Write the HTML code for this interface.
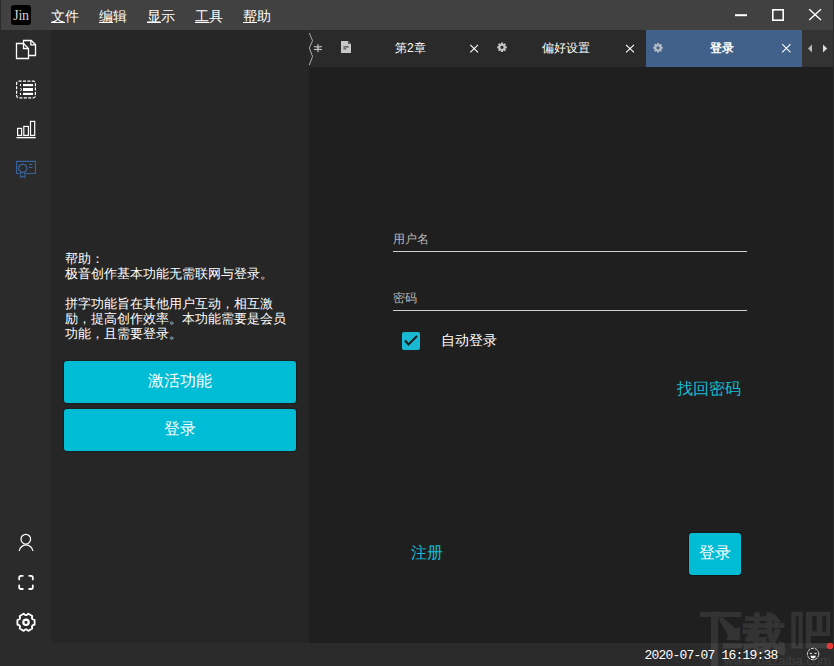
<!DOCTYPE html>
<html><head><meta charset="utf-8">
<style>
*{box-sizing:border-box;margin:0;padding:0}
html,body{width:834px;height:666px;overflow:hidden;background:#1f1f1f;font-family:"Liberation Sans",sans-serif;color:#fff}
.abs{position:absolute;white-space:nowrap}
#title{left:0;top:0;width:834px;height:30px;background:#414141}
#logo{left:11px;top:5px;width:20px;height:20px;background:#000;border-radius:3px}
.menu{top:7px;font-size:14px;line-height:18px;color:#fff}
.menu u{text-decoration:none}
#iconbar{left:0;top:30px;width:51px;height:613px;background:#2b2b2b}
#lpanel{left:51px;top:30px;width:258px;height:613px;background:#262626}
#tabbar{left:309px;top:30px;width:525px;height:37px;background:#2a2a2a}
#main{left:309px;top:67px;width:525px;height:576px;background:#1f1f1f}
#status{left:0;top:643px;width:834px;height:23px;background:#2b2b2b}
.tab{top:40px;font-size:12px;line-height:16px;color:#fff}
.btn{background:#00bcd4;border-radius:3px;box-shadow:0 0 1px 1px rgba(0,0,0,0.25)}
.bt{color:#fff;font-size:16px;line-height:18px}
</style></head><body>
<div id="title" class="abs"></div>
<div id="logo" class="abs"></div>
<div class="abs" style="left:12px;top:8px;width:18px;font-family:'Liberation Serif',serif;font-size:14px;line-height:16px;color:#d0d0d0;text-align:center;letter-spacing:-0.3px">Jin</div>
<div class="abs menu" style="left:51px"><u>文</u>件</div>
<div class="abs menu" style="left:99px"><u>编</u>辑</div>
<div class="abs menu" style="left:147px"><u>显</u>示</div>
<div class="abs menu" style="left:195px"><u>工</u>具</div>
<div class="abs menu" style="left:243px"><u>帮</u>助</div>
<div class="abs" style="left:51px;top:21.5px;width:14px;height:1.5px;background:#fff"></div>
<div class="abs" style="left:99px;top:21.5px;width:14px;height:1.5px;background:#fff"></div>
<div class="abs" style="left:147px;top:21.5px;width:14px;height:1.5px;background:#fff"></div>
<div class="abs" style="left:195px;top:21.5px;width:14px;height:1.5px;background:#fff"></div>
<div class="abs" style="left:243px;top:21.5px;width:14px;height:1.5px;background:#fff"></div>

<div id="iconbar" class="abs"></div>
<div id="lpanel" class="abs"></div>
<div id="tabbar" class="abs"></div>
<div id="main" class="abs"></div>
<div id="status" class="abs"></div>
<div class="abs" style="left:802px;top:30px;width:32px;height:37px;background:#333"></div>
<div class="abs" style="left:0;top:0;width:1px;height:30px;background:#2c2c2c"></div>
<div class="abs" style="left:833px;top:0;width:1px;height:666px;background:#2b2b2b"></div>


<!-- left panel text -->
<div class="abs" style="left:65px;top:251px;font-size:13px;line-height:15px;color:#fff">帮助：<br>极音创作基本功能无需联网与登录。<br><br>拼字功能旨在其他用户互动，相互激<br>励，提高创作效率。本功能需要是会员<br>功能，且需要登录。</div>
<div class="abs btn" style="left:64px;top:361px;width:232px;height:42px"></div>
<div class="abs bt" style="left:148px;top:372px">激活功能</div>
<div class="abs btn" style="left:64px;top:409px;width:232px;height:42px"></div>
<div class="abs bt" style="left:164px;top:420px">登录</div>

<!-- tabs -->
<div class="abs" style="left:646px;top:30px;width:156px;height:37px;background:#41618a"></div>
<div class="abs tab" style="left:395px">第2章</div>
<div class="abs tab" style="left:542px">偏好设置</div>
<div class="abs tab" style="left:710px;font-weight:bold">登录</div>

<!-- form -->
<div class="abs" style="left:393px;top:231px;font-size:12px;line-height:16px;color:#b8b8b8">用户名</div>
<div class="abs" style="left:393px;top:251px;width:354px;height:1px;background:#d0d0d0"></div>
<div class="abs" style="left:393px;top:290px;font-size:12px;line-height:16px;color:#b8b8b8">密码</div>
<div class="abs" style="left:393px;top:310px;width:354px;height:1px;background:#d0d0d0"></div>
<div class="abs" style="left:402px;top:332px;width:18px;height:18px;background:#19b9d3;border-radius:2px"></div>
<div class="abs" style="left:440.5px;top:331px;font-size:14.2px;line-height:18px;color:#fff">自动登录</div>
<div class="abs" style="left:677px;top:380px;font-size:16px;line-height:18px;color:#14bcd6">找回密码</div>
<div class="abs" style="left:411px;top:544px;font-size:16px;line-height:18px;color:#14bcd6">注册</div>
<div class="abs btn" style="left:689px;top:533px;width:52px;height:42px"></div>
<div class="abs bt" style="left:699px;top:544px">登录</div>

<!-- watermark -->
<div class="abs" style="left:0;top:0;width:834px;height:666px;opacity:0.085">
<div class="abs" style="left:742.5px;top:604px;font-size:43px;line-height:60px;color:#fff;-webkit-text-stroke:2.5px #fff">载</div>
<div class="abs" style="left:724px;top:653px;font-size:13px;line-height:16px;color:#fff;letter-spacing:0">www.xiazaiba.com</div>
<svg class="abs" style="left:0;top:0" width="834" height="666" fill="#fff">
<rect x="700" y="611.8" width="41.3" height="5.2"/>
<rect x="711" y="611.8" width="7" height="54.2"/>
<path d="M718.2,617.5 L722.3,617.5 L735.9,628.8 L740,626.6 L740.3,640.8 L725.8,639.5 L728.3,635.7 Q722,626 718.2,617.5 Z"/>
<rect x="723" y="643.3" width="19" height="5.1"/>
<path fill-rule="evenodd" d="M791.3,611.8 H802.6 V648.4 H791.3 Z M795.8,616.3 V646 H798.6 V616.3 Z"/>
<path fill-rule="evenodd" d="M806,611.8 H830.2 V636 H811 V643.3 H830.2 V648.4 H806 Z M812.2,616.3 V631.5 H816.7 V616.3 Z M822.3,616.3 V631.5 H826.2 V616.3 Z"/>
</svg>
</div>

<div class="abs" style="left:644.5px;top:649px;font-size:13px;line-height:13px;letter-spacing:-0.8px;font-family:'Liberation Mono',monospace;color:#fff">2020-07-07 16:19:38</div>

<svg class="abs" style="left:0;top:0" width="834" height="666" viewBox="0 0 834 666" fill="none" stroke-linecap="butt">
  <!-- left icon bar -->
  <g stroke="#fff" stroke-width="1.3">
    <path d="M16.5,43.5 H23.5 L28.5,48.5 V58.5 H16.5 Z"/>
    <path d="M23.5,43.5 V48.5 H28.5"/>
    <path d="M23.5,43 V40.5 H31.2 L35.5,44.6 V55.5 H29"/>
    <path d="M30.8,40.5 V44.8 H35.5"/>
  </g>
  <g stroke="#fff" stroke-width="1.2">
    <rect x="16.6" y="81.2" width="18.8" height="16.6" rx="2" stroke-dasharray="3 1.4"/>
    <path d="M20.5,84 v2 M20.5,88 l1,1.5 l-1,1.5 M20.5,93 v2" stroke-width="1"/>
  </g>
  <g fill="#fff">
    <rect x="23" y="84" width="10" height="2.2"/>
    <rect x="23" y="88" width="10" height="3"/>
    <rect x="23" y="92.8" width="10" height="2.2"/>
  </g>
  <g stroke="#fff" stroke-width="1.2">
    <rect x="17.6" y="128.4" width="4" height="7"/>
    <rect x="23.8" y="126.4" width="4.6" height="9"/>
    <rect x="30.5" y="121.4" width="4.2" height="14"/>
    <path d="M16.5,137.6 H35.7" stroke-width="1.4"/>
  </g>
  <g stroke="#3a649c" stroke-width="1.1" stroke-linejoin="round">
    <path d="M19.5,173.5 H16.6 V161.4 H35.4 V173.5 H26"/>
    <path d="M29,164.5 H32.5 M29,167.5 H32.5"/>
    <path d="M22.80,163.90 L23.78,164.63 L25.00,164.49 L25.49,165.61 L26.61,166.10 L26.47,167.32 L27.20,168.30 L26.47,169.28 L26.61,170.50 L25.49,170.99 L25.00,172.11 L23.78,171.97 L22.80,172.70 L21.82,171.97 L20.60,172.11 L20.11,170.99 L18.99,170.50 L19.13,169.28 L18.40,168.30 L19.13,167.32 L18.99,166.10 L20.11,165.61 L20.60,164.49 L21.82,164.63 Z"/>
    <path d="M20.7,172 V177.6 L22.8,176.2 L24.9,177.6 V172"/>
  </g>
  <g stroke="#fff" stroke-width="1.25">
    <circle cx="25.8" cy="539.2" r="4.8"/>
    <path d="M19.2,551 A6.9,6.9 0 0 1 32.9,551"/>
  </g>
  <g stroke="#fff" stroke-width="1.8" stroke-linecap="round" stroke-linejoin="round">
    <path d="M19.2,579.4 V577.6 Q19.2,575.8 21,575.8 H22.8 M29.2,575.8 H31 Q32.8,575.8 32.8,577.6 V579.4 M32.8,585.4 V587.2 Q32.8,589 31,589 H29.2 M22.8,589 H21 Q19.2,589 19.2,587.2 V585.4"/>
  </g>
  <g stroke="#fff" stroke-width="1.8" stroke-linejoin="round">
    <path d="M32.53,625.34 L34.60,624.60 L34.60,620.00 L32.53,619.26 L31.90,618.17 L32.29,616.01 L28.30,613.70 L26.63,615.13 L25.37,615.13 L23.70,613.70 L19.71,616.01 L20.10,618.17 L19.47,619.26 L17.40,620.00 L17.40,624.60 L19.47,625.34 L20.10,626.43 L19.71,628.59 L23.70,630.90 L25.37,629.47 L26.63,629.47 L28.30,630.90 L32.29,628.59 L31.90,626.43 Z"/>
    <circle cx="26" cy="622.3" r="2.7" stroke-width="2.2"/>
  </g>

  <!-- title controls -->
  <g stroke="#fff">
    <path d="M735,15.2 H747" stroke-width="2"/>
    <rect x="772.8" y="9.8" width="10.4" height="10.4" stroke-width="1.6"/>
    <path d="M809.2,9.3 L821,20 M821,9.3 L809.2,20" stroke-width="1.4"/>
  </g>

  <!-- tab bar -->
  <path d="M309.3,33 L312.6,40.7 L309.3,48 L312.6,56.5 L309.3,65" stroke="#aaa" stroke-width="1"/>
  <g stroke="#e8e8e8" stroke-width="0.9">
    <path d="M318,44 V52.2 M314,46.6 Q318,47.4 322,46.6 M314,49.6 Q318,48.8 322,49.6"/>
  </g>
  <path d="M341,41 H348 L351,44 V53 H341 Z" fill="#c8c8c8"/>
  <path d="M348,41 V44 H351" fill="#555" />
  <path d="M343.4,46.9 H348.6 M343.4,48.7 H346.2" stroke="#6a6a6a" stroke-width="1.6"/>
  <g stroke="#fff" stroke-width="1.1">
    <path d="M470.3,44.8 L478,52.3 M478,44.8 L470.3,52.3"/>
    <path d="M626,44.8 L634,52.3 M634,44.8 L626,52.3"/>
    <path d="M782.2,44.2 L790.5,52.4 M790.5,44.2 L782.2,52.4"/>
  </g>
  <g id="gear" fill="#c4c4c4">
    <path fill-rule="evenodd" d="M505.40,48.47 L506.81,48.23 L506.81,46.37 L505.40,46.13 L505.24,45.72 L506.06,44.56 L504.74,43.24 L503.58,44.06 L503.17,43.90 L502.93,42.49 L501.07,42.49 L500.83,43.90 L500.42,44.06 L499.26,43.24 L497.94,44.56 L498.76,45.72 L498.60,46.13 L497.19,46.37 L497.19,48.23 L498.60,48.47 L498.76,48.88 L497.94,50.04 L499.26,51.36 L500.42,50.54 L500.83,50.70 L501.07,52.11 L502.93,52.11 L503.17,50.70 L503.58,50.54 L504.74,51.36 L506.06,50.04 L505.24,48.88 Z M503.6,47.3 A1.6,1.6 0 1 0 500.4,47.3 A1.6,1.6 0 1 0 503.6,47.3 Z"/>
  </g>
  <g fill="#b4bcc6" transform="translate(156,0.5)">
    <path fill-rule="evenodd" d="M505.40,48.47 L506.81,48.23 L506.81,46.37 L505.40,46.13 L505.24,45.72 L506.06,44.56 L504.74,43.24 L503.58,44.06 L503.17,43.90 L502.93,42.49 L501.07,42.49 L500.83,43.90 L500.42,44.06 L499.26,43.24 L497.94,44.56 L498.76,45.72 L498.60,46.13 L497.19,46.37 L497.19,48.23 L498.60,48.47 L498.76,48.88 L497.94,50.04 L499.26,51.36 L500.42,50.54 L500.83,50.70 L501.07,52.11 L502.93,52.11 L503.17,50.70 L503.58,50.54 L504.74,51.36 L506.06,50.04 L505.24,48.88 Z M503.6,47.3 A1.6,1.6 0 1 0 500.4,47.3 A1.6,1.6 0 1 0 503.6,47.3 Z"/>
  </g>
  <path d="M812,44.4 V52.6 L808,48.5 Z" fill="#bbb"/>
  <path d="M823,44.4 V52.6 L827.2,48.5 Z" fill="#ddd"/>

  <!-- checkbox tick -->
  <path d="M405,340.5 L408.5,344.5 L417,336" stroke="#1d1d1d" stroke-width="2.2"/>

  <!-- status bar emoji -->
  <circle cx="813.1" cy="654" r="5.7" stroke="#f0f0f0" stroke-width="0.9" stroke-dasharray="3.2 0.8"/>
  <path d="M809.8,653.4 H812 M814.4,653.4 H816.6" stroke="#fff" stroke-width="0.9"/>
  <path d="M810.3,655.8 H816 Q815.6,658.4 813.15,658.4 Q810.7,658.4 810.3,655.8 Z" fill="#fff"/>
  <circle cx="830" cy="646" r="3.3" fill="#e53935"/>
</svg>
</body></html>
